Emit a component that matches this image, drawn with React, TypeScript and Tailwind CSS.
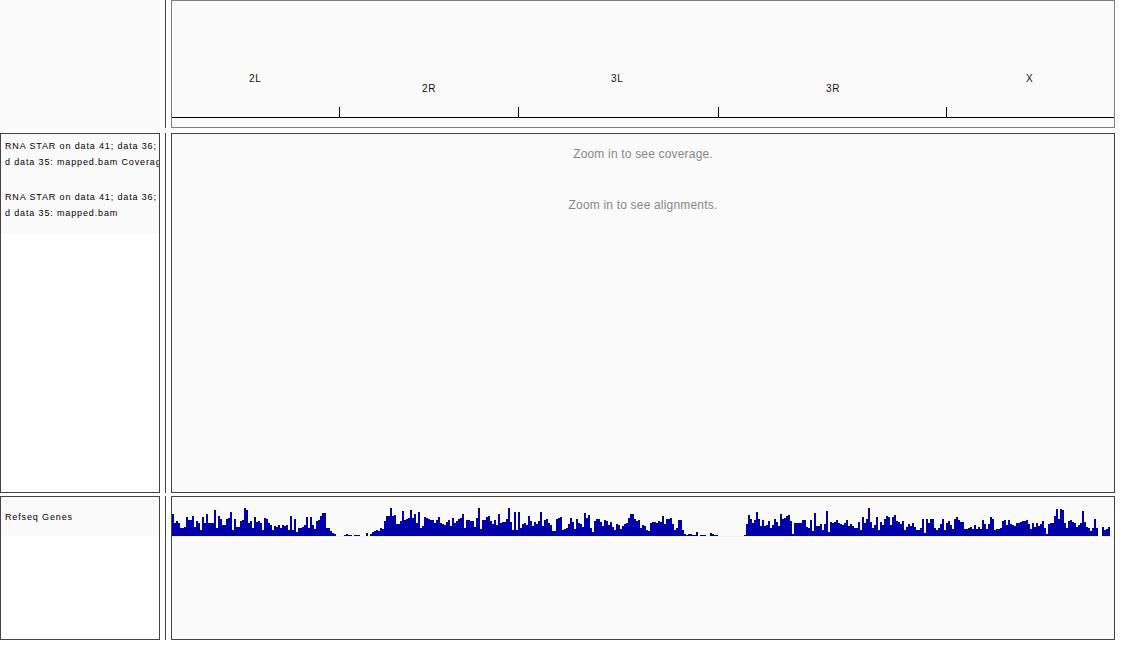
const FONT = "font-['Liberation_Sans',Arial,sans-serif]";

// coverage histogram, heights in px for 2px wide columns, grouped by start x
const SEGMENTS: { x: number; h: number[] }[] = [
  {
    x: 172,
    h: [
      22, 13, 15, 13, 8, 8, 9, 19, 16, 16, 20, 9, 15, 13, 6, 19, 13, 22, 13, 13, 13, 26, 8, 20, 17, 11, 11, 17, 18, 24,
      6, 17, 9, 9, 15, 16, 28, 26, 13, 15, 8, 19, 14, 15, 13, 6, 18, 17, 13, 11, 6, 10, 9, 11, 8, 11, 10, 11, 6, 20, 6,
      17, 4, 8, 8, 9, 11, 19, 8, 19, 11, 7, 15, 16, 20, 23, 23, 8, 8, 5, 3, 2, 0, 0, 0, 0, 1, 2, 1, 1, 0, 1, 1, 1, 0, 0,
      0, 3, 0, 2, 4, 5, 6, 5, 8, 7,
    ],
  },
  {
    x: 384,
    h: [
      15, 20, 20, 28, 20, 21, 12, 12, 15, 25, 16, 17, 18, 26, 18, 22, 13, 24, 8, 10, 19, 18, 17, 16, 16, 13, 16, 19, 13,
      12, 11, 14, 16, 10, 18, 13, 15, 17, 18, 22, 8, 16, 16, 15, 15, 9, 18, 28, 7, 16, 16, 19, 20, 15, 12, 16, 11, 22,
      13, 14, 14, 17, 28, 14, 6, 24, 6, 24, 8, 12, 13, 11, 20, 15, 10, 14, 12, 15, 24, 10, 16, 17, 13, 11, 5, 5, 17, 18,
      19, 6, 7, 8, 12, 18, 14, 7, 17, 13, 12, 9, 23, 18, 21, 8, 4, 15, 17, 17, 14, 10, 16, 15, 11, 14, 9, 6, 12, 11, 7,
      10, 12, 13, 18, 22, 22, 17, 15, 16, 8, 11, 10, 6, 5, 13, 14, 14, 13, 15, 14, 20, 12, 17, 17, 18, 12, 6, 8, 16, 16,
      6, 2, 1, 2, 2, 1, 1, 4, 0, 1, 1, 1, 0, 0, 3, 2, 1, 1,
    ],
  },
  {
    x: 744,
    h: [1, 12, 21, 17, 13, 16, 24, 17],
  },
  {
    x: 758,
    h: [
      10, 10, 16, 10, 11, 15, 8, 11, 17, 14, 10, 22, 17, 18, 20, 21, 15, 2, 13, 13, 13, 13, 16, 16, 9, 8, 16, 5, 23, 10,
      10, 12, 6, 12, 25, 4, 14, 13, 14, 16, 13, 12, 11, 13, 16, 10, 12, 10, 8, 8, 14, 6, 19, 13, 17, 28, 14, 8, 11, 19,
      6, 14, 11, 17, 20, 19, 11, 19, 21, 15, 14, 12, 15, 6, 9, 12, 10, 13, 9, 6, 6, 8, 17, 3, 17, 13, 17, 17, 8, 6,
      8, 12, 17, 6, 13, 15, 11, 7, 17, 19, 16, 14, 14, 7, 7, 8, 9, 7, 11, 7, 9, 7, 16, 12, 7, 12, 19, 17, 6, 7, 7, 8,
      15, 16, 11, 16, 12, 11, 10, 13, 13, 14, 15, 15, 16, 12, 7, 13, 9, 13, 10, 12, 15, 8, 2, 12, 13, 13, 20, 27, 17, 27,
      26, 13, 8, 15, 16, 14, 13, 9, 11, 13, 25, 14, 9, 8, 5, 8, 17, 8, 0, 0, 9, 6, 7, 9,
    ],
  },
];

// panel's inner box starts at x=172, bars are drawn relative to that
const BASELINE = 39;
const coveragePath = SEGMENTS.flatMap((s) =>
  s.h.map((h, i) => (h > 0 ? `M${s.x - 172 + i * 2} ${BASELINE}v-${h}h2v${h}z` : ""))
).join("");

const TICKS = [339, 518, 718, 946];

const CHROMS = [
  { name: "2L", x: 249, y: 73 },
  { name: "2R", x: 422, y: 83 },
  { name: "3L", x: 611, y: 73 },
  { name: "3R", x: 826, y: 83 },
  { name: "X", x: 1026, y: 73 },
];

function TrackLabel({ text }: { text: string }) {
  return (
    <div className="h-[16px] overflow-hidden whitespace-nowrap pl-[4px] text-[9px] leading-[16px] tracking-[0.86px] text-black">
      {text}
    </div>
  );
}

function Divider({ className }: { className: string }) {
  return <div className={`mx-[5px] w-px shrink-0 bg-[#444] ${className}`} />;
}

export default function App() {
  return (
    <div className={`flex h-[646px] w-[1134px] flex-col overflow-hidden bg-white ${FONT}`}>
      {/* ruler */}
      <div className="flex h-[128px] shrink-0">
        <div className="w-[160px] shrink-0 bg-[#fafafa]" />
        <Divider className="h-full" />
        <div className="relative w-[944px] shrink-0 border border-[#808080] bg-[#fafafa]">
          {CHROMS.map((c) => (
            <span
              key={c.name}
              className="absolute text-[10px] leading-[10px] tracking-[0.6px] text-[#111]"
              style={{ left: c.x - 172, top: c.y }}
            >
              {c.name}
            </span>
          ))}
          {TICKS.map((x) => (
            <div key={x} className="absolute top-[106px] h-[10px] w-px bg-black" style={{ left: x - 172 }} />
          ))}
          <div className="absolute inset-x-0 top-[116px] h-px bg-black" />
        </div>
      </div>

      {/* alignments */}
      <div className="mt-[5px] flex h-[360px] shrink-0">
        <div className="w-[160px] shrink-0 overflow-hidden border border-[#444] bg-white">
          <div className="h-[100px] bg-[#fafafa] pt-[4px]">
            <TrackLabel text="RNA STAR on data 41; data 36;" />
            <TrackLabel text="d data 35: mapped.bam Coverage" />
            <div className="h-[19px]" />
            <TrackLabel text="RNA STAR on data 41; data 36;" />
            <TrackLabel text="d data 35: mapped.bam" />
          </div>
        </div>
        <Divider className="h-full" />
        <div className="w-[944px] shrink-0 border border-[#444] bg-[#fafafa] text-center text-[12px] tracking-[0.18px] text-[#888]">
          <div className="mt-[13px] h-[14px] leading-[14px]">Zoom in to see coverage.</div>
          <div className="mt-[37px] h-[14px] leading-[14px]">Zoom in to see alignments.</div>
        </div>
      </div>

      {/* genes */}
      <div className="mt-[3px] flex h-[144px] shrink-0">
        <div className="w-[160px] shrink-0 overflow-hidden border border-[#444] bg-white">
          <div className="h-[39px] bg-[#fafafa] pt-[12px]">
            <TrackLabel text="Refseq Genes" />
          </div>
        </div>
        <Divider className="h-full" />
        <div className="w-[944px] shrink-0 border border-[#444] bg-[#fafafa]">
          <svg width="942" height="40" className="block" shapeRendering="crispEdges">
            <rect x="0" y={BASELINE} width="942" height="1" fill="#f0f0f0" />
            <path d={coveragePath} fill="#0000aa" />
          </svg>
        </div>
      </div>
    </div>
  );
}
